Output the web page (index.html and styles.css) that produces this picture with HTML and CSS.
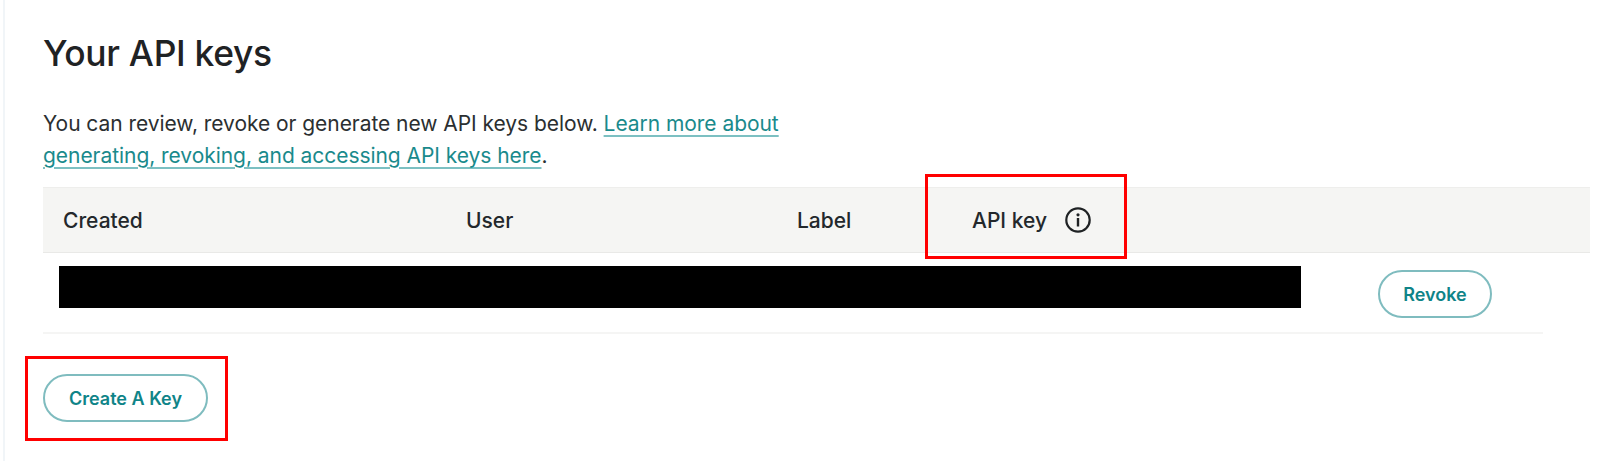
FILE: index.html
```html
<!DOCTYPE html>
<html lang="en">
<head>
<meta charset="utf-8">
<title>Your API keys</title>
<link rel="stylesheet" href="styles.css">
</head>
<body>
<main class="panel">
  <h1 class="title">Your API keys</h1>
  <p class="intro">You can review, revoke or generate new API keys below. <a class="link" href="#">Learn more about<br>generating, revoking, and accessing API keys here</a>.</p>
  <div class="table">
    <div class="thead">
      <span class="th th-created">Created</span>
      <span class="th th-user">User</span>
      <span class="th th-label">Label</span>
      <span class="th th-key">API key
        <svg class="info" viewBox="0 0 26 26" width="26" height="26" aria-hidden="true">
          <circle cx="13" cy="13" r="11.7" fill="none" stroke="#1f2224" stroke-width="2.2"/>
          <circle cx="13" cy="7.8" r="1.6" fill="#1f2224"/>
          <rect x="11.8" y="11" width="2.4" height="8.5" fill="#1f2224"/>
        </svg>
      </span>
    </div>
    <div class="row">
      <div class="redacted"></div>
      <button class="btn btn-revoke" type="button">Revoke</button>
    </div>
  </div>
  <button class="btn btn-create" type="button">Create A Key</button>
  <div class="mark mark-key"></div>
  <div class="mark mark-create"></div>
</main>
</body>
</html>
```

FILE: styles.css
```css
* { box-sizing: border-box; }
html, body { margin: 0; height: 461px; background: #fff; overflow: hidden; }
body { font-family: Inter, "Liberation Sans", sans-serif; color: #23282b; }
.panel {
  position: relative;
  height: 461px;
  margin-left: 3px;
  padding: 31px 10px 0 38px;
  border-left: 2px solid #f1f5f8;
}
.title {
  margin: 0;
  font-size: 35.4px;
  line-height: 46px;
  font-weight: 500;
  letter-spacing: -0.3px;
  color: #1f2224;
}
.intro {
  margin: 31px 0 0;
  font-size: 21px;
  line-height: 32px;
  letter-spacing: -0.05px;
  color: #2b2f31;
}
.link {
  color: #1a8a8c;
  text-decoration: underline;
  text-decoration-color: #7cc0c2;
  text-decoration-thickness: 2px;
  text-underline-offset: 4px;
}
.table { margin-top: 15px; }
.thead {
  display: flex;
  align-items: center;
  height: 66px;
  background: #f5f5f3;
  border-top: 1px solid #eeeeec;
  border-bottom: 1px solid #e9e9e7;
  font-size: 21px;
  font-weight: 500;
  color: #23282b;
}
.th { display: flex; align-items: center; }
.th-created { margin-left: 20px; width: 403px; }
.th-user { width: 331px; }
.th-label { width: 175px; }
.th-key { gap: 18px; }
.row {
  display: flex;
  align-items: flex-start;
  width: 1500px;
  height: 81px;
  padding: 13px 0 0 16px;
  border-bottom: 2px solid #f5f5f4;
}
.redacted { width: 1242px; height: 42px; background: #000; }
.btn {
  display: block;
  padding: 0;
  background: #fff;
  border: 2px solid #7fbcbf;
  border-radius: 24px;
  height: 48px;
  font-family: inherit;
  font-size: 18px;
  font-weight: 600;
  color: #0f8488;
}
.btn-revoke { width: 114px; margin: 4px 0 0 77px; }
.btn-create { width: 165px; margin-top: 40px; }
.mark { position: absolute; border: 3px solid #f00; }
.mark-key { left: 920px; top: 174px; width: 202px; height: 85px; }
.mark-create { left: 20px; top: 356px; width: 203px; height: 85px; }
```
